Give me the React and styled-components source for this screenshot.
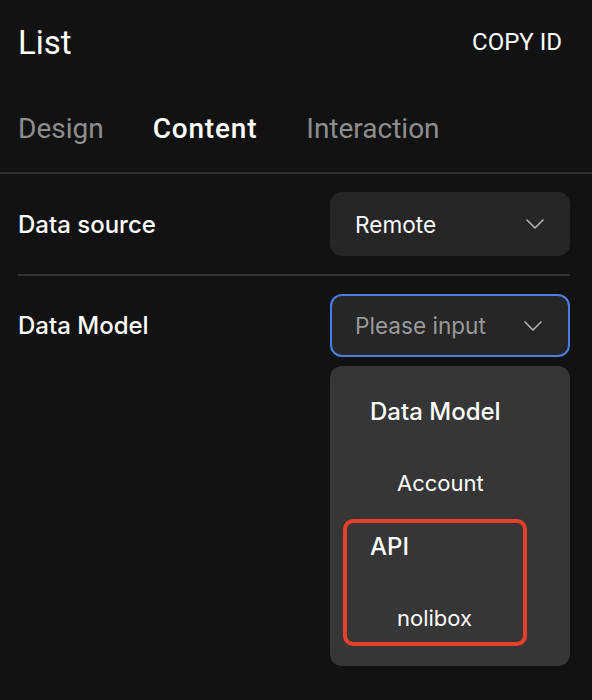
import React from 'react';
import styled, { createGlobalStyle } from 'styled-components';

const GlobalStyle = createGlobalStyle`
  html, body {
    margin: 0;
    padding: 0;
    background: #121212;
    min-height: 100%;
  }
  * { box-sizing: border-box; }
`;

const Chevron = () => (
  <svg width="18" height="10" viewBox="0 0 18 10" fill="none">
    <path d="M1 1l8 8 8-8" stroke="#b5b5b5" strokeWidth="1.6" strokeLinecap="round" strokeLinejoin="round" />
  </svg>
);

export default function App() {
  return (
    <Panel>
      <GlobalStyle />
      <Header>
        <Title>List</Title>
        <CopyButton>COPY ID</CopyButton>
      </Header>
      <Tabs>
        <Tab>Design</Tab>
        <Tab active>Content</Tab>
        <Tab>Interaction</Tab>
      </Tabs>
      <Content>
        <Row>
          <Label>Data source</Label>
          <SelectWrap>
            <Select>
              <Value>Remote</Value>
              <Chevron />
            </Select>
          </SelectWrap>
        </Row>
        <Divider />
        <Row>
          <Label>Data Model</Label>
          <SelectWrap>
            <Select focused>
              <Value placeholder>Please input</Value>
              <Chevron />
            </Select>
            <Menu>
              <Group>
                <GroupTitle>Data Model</GroupTitle>
                <Option>Account</Option>
              </Group>
              <Group highlighted>
                <GroupTitle>API</GroupTitle>
                <Option>nolibox</Option>
              </Group>
            </Menu>
          </SelectWrap>
        </Row>
      </Content>
    </Panel>
  );
}

/*
    STYLING
*/

const uiFont = `Inter, 'Noto Sans', 'Liberation Sans', sans-serif`;
const headFont = `Roboto, 'Liberation Sans', sans-serif`;

const Panel = styled.div`
  width: 592px;
  min-height: 700px;
  background: #121212;
  color: #fff;
`;

const Header = styled.div`
  display: flex;
  justify-content: space-between;
  align-items: center;
  height: 84px;
  padding: 0 30px 0 18px;
`;

const Title = styled.h1`
  margin: 0;
  font-family: ${headFont};
  font-size: 33px;
  font-weight: 400;
  color: #fff;
`;

const CopyButton = styled.span`
  font-family: ${headFont};
  font-size: 24px;
  color: #fff;
`;

const Tabs = styled.div`
  display: flex;
  align-items: center;
  gap: 49px;
  height: 90px;
  padding: 0 18px;
  border-bottom: 2px solid #2e2e2e;
`;

const Tab = styled.span`
  font-family: ${headFont};
  font-size: 28px;
  font-weight: ${p => (p.active ? 500 : 400)};
  letter-spacing: ${p => (p.active ? '0.8px' : '0')};
  color: ${p => (p.active ? '#fff' : '#8e8e8e')};
`;

const Content = styled.div`
  padding: 18px 22px 0 18px;
`;

const Row = styled.div`
  display: flex;
  justify-content: space-between;
  align-items: center;
`;

const Label = styled.span`
  font-family: ${uiFont};
  font-size: 24px;
  font-weight: 500;
  color: #fff;
`;

const SelectWrap = styled.div`
  position: relative;
  width: 240px;
`;

const Select = styled.div`
  display: flex;
  justify-content: space-between;
  align-items: center;
  height: ${p => (p.focused ? '63px' : '64px')};
  padding: 0 26px 0 ${p => (p.focused ? '23px' : '25px')};
  background: #262626;
  border-radius: 12px;
  border: ${p => (p.focused ? '2px solid #4a7fe6' : 'none')};
`;

const Value = styled.span`
  font-family: ${uiFont};
  font-size: 22.6px;
  color: ${p => (p.placeholder ? '#9a9a9a' : '#fff')};
`;

const Divider = styled.div`
  height: 2px;
  background: #333;
  margin: 18px 0;
`;

const Menu = styled.div`
  position: absolute;
  top: calc(100% + 9px);
  left: 0;
  width: 240px;
  padding: 18px 0 20px 13px;
  background: #363636;
  border-radius: 12px;
  display: flex;
  flex-direction: column;
  gap: 8px;
`;

const Group = styled.div`
  width: 184px;
  border: 4px solid ${p => (p.highlighted ? '#e8402a' : 'transparent')};
  border-radius: 10px;
`;

const GroupTitle = styled.div`
  height: 46px;
  display: flex;
  align-items: center;
  padding-left: 23px;
  font-family: ${uiFont};
  font-size: 24px;
  font-weight: 500;
  color: #fff;
`;

const Option = styled.div`
  height: 48px;
  margin-top: 25px;
  display: flex;
  align-items: center;
  padding-left: 50px;
  font-family: ${uiFont};
  font-size: 22px;
  color: #fff;
`;
